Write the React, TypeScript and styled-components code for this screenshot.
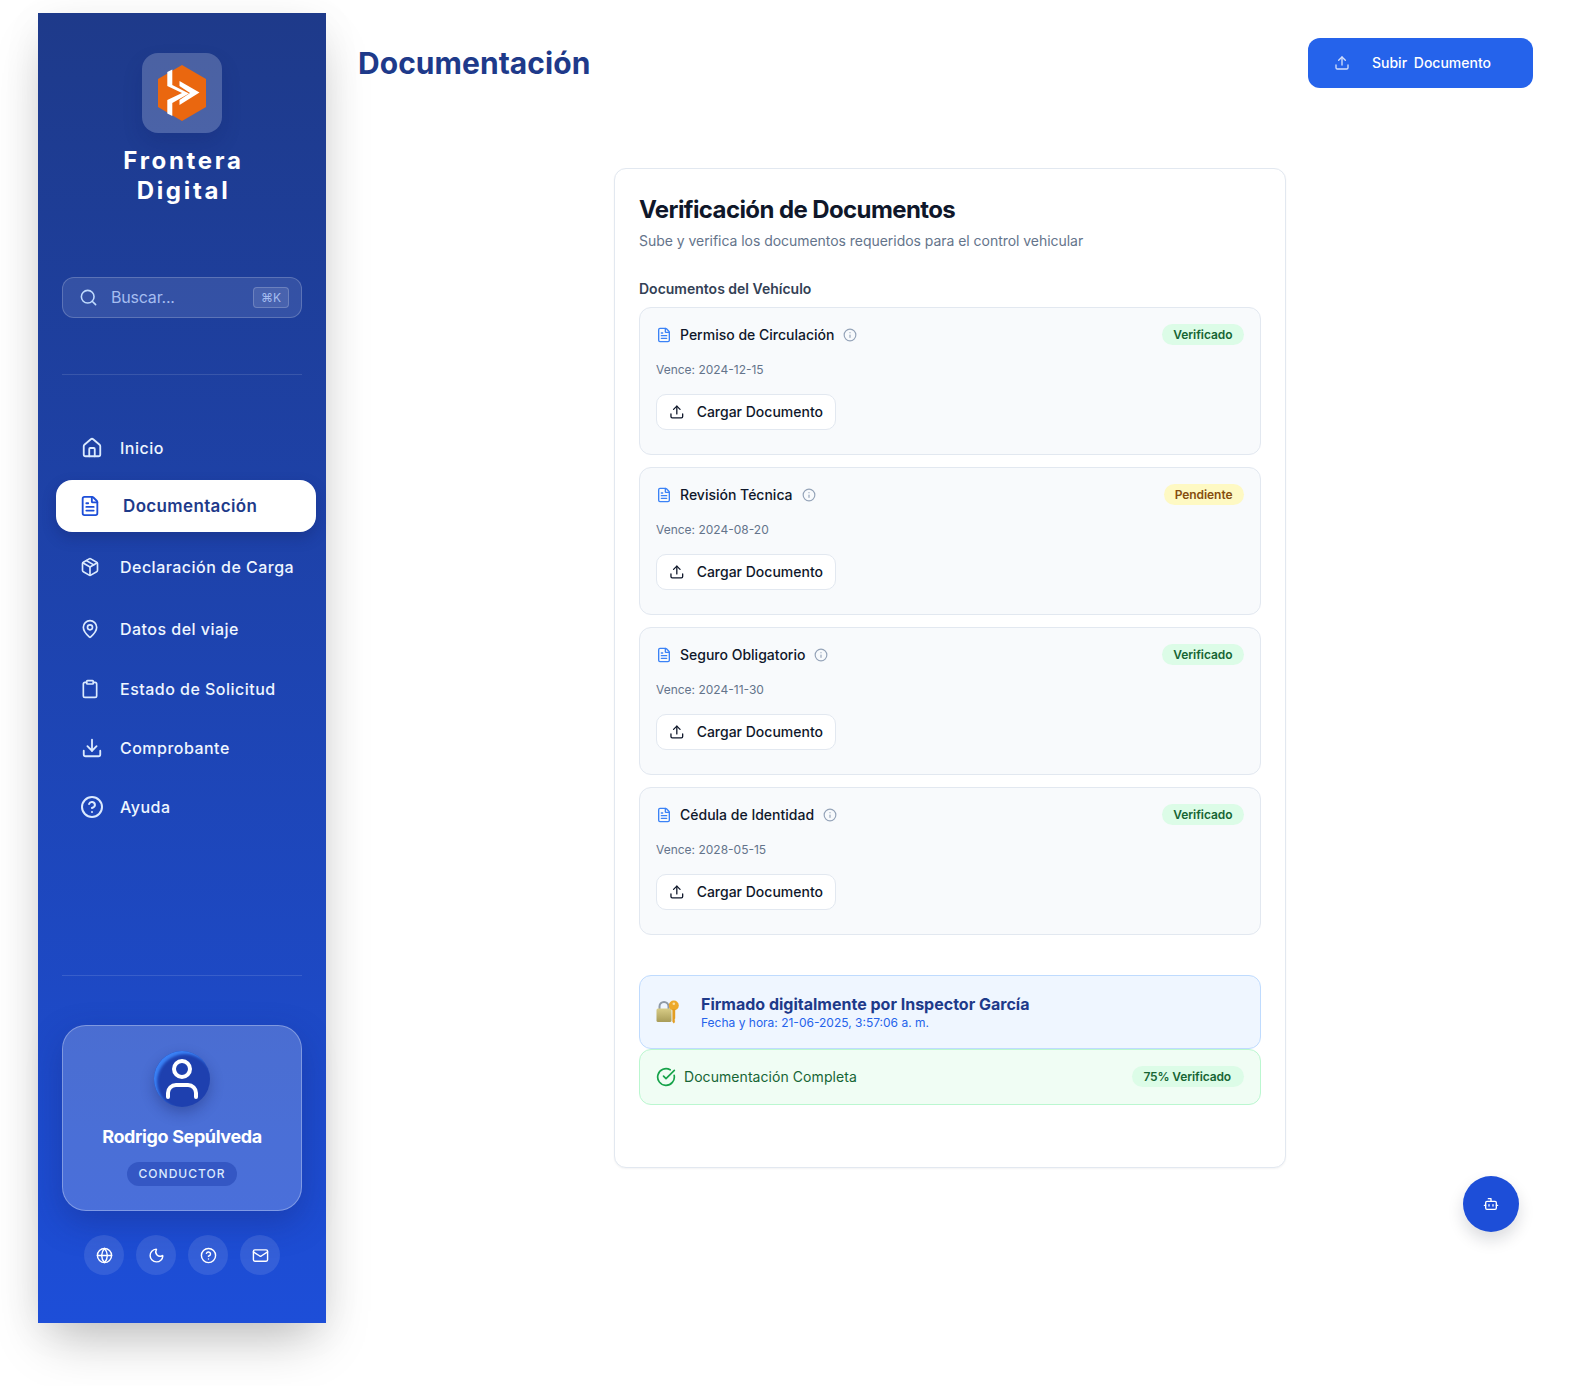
import styled, { createGlobalStyle } from "styled-components"
import {
	Bot,
	CircleCheckBig,
	CircleHelp,
	Clipboard,
	Download,
	FileText,
	Globe,
	House,
	Info,
	Mail,
	MapPin,
	Moon,
	Package,
	Search,
	Upload,
	User,
} from "lucide-react"

const GlobalStyle = createGlobalStyle`
	html, body {
		margin: 0;
		padding: 0;
		background: #fff;
		font-family: "Inter", "Liberation Sans", sans-serif;
	}
	* {
		box-sizing: border-box;
	}
`

const Page = styled.div`
	display: flex;
	align-items: flex-start;
	min-height: 1386px;
	padding: 13px 0 0 38px;
	overflow: hidden;
`

const Sidebar = styled.aside`
	flex: 0 0 288px;
	height: 1310px;
	padding: 40px 24px 0;

	display: flex;
	flex-direction: column;

	background: linear-gradient(180deg, #1e3a8a 0%, #1d4ed8 100%);
	box-shadow: 0 25px 50px -12px rgba(0, 0, 0, .25), 0 8px 40px rgba(0, 0, 0, .05);
`

const LogoTile = styled.div`
	width: 80px;
	height: 80px;
	align-self: center;

	display: flex;
	align-items: center;
	justify-content: center;

	background: rgba(255, 255, 255, .2);
	border-radius: 16px;
	box-shadow: 0 10px 20px rgba(15, 23, 80, .15);
`

const BrandName = styled.h1`
	margin: 13px 0 0;
	padding-left: 3px;

	font-size: 24px;
	line-height: 30px;
	font-weight: 700;
	letter-spacing: 2.7px;
	color: #fff;
	text-align: center;
`

const SearchBox = styled.div`
	height: 41px;
	margin-top: 71px;
	padding: 0 12px 0 16px;

	display: flex;
	align-items: center;

	background: rgba(255, 255, 255, .1);
	border: 1px solid rgba(255, 255, 255, .2);
	border-radius: 12px;
	color: #bfdbfe;
`

const SearchText = styled.span`
	flex: 1;
	margin-left: 13px;
	padding-bottom: 1px;

	font-size: 16px;
	letter-spacing: -.2px;
	color: #a5bdf0;
`

const Kbd = styled.kbd`
	height: 21px;
	padding: 0 7px;

	display: flex;
	align-items: center;

	font-family: "Inter", "DejaVu Sans", sans-serif;
	font-size: 12px;
	color: #a5bdf0;
	background: rgba(255, 255, 255, .1);
	border: 1px solid rgba(255, 255, 255, .2);
	border-radius: 4px;
`

const Divider = styled.div<{ $top: number }>`
	height: 1px;
	margin-top: ${({ $top }) => $top}px;

	background: rgba(255, 255, 255, .12);
`

const NavList = styled.nav`
	margin-top: 51px;

	display: flex;
	flex-direction: column;
	gap: 10px;
`

const NavItem = styled.a<{ $height: number }>`
	height: ${({ $height }) => $height}px;

	display: flex;
	align-items: center;

	font-size: 16px;
	font-weight: 500;
	letter-spacing: .48px;
	color: #eff6ff;
`

const ActiveNavItem = styled.a`
	height: 52px;
	margin: 0 -14px 0 -6px;
	padding-left: 24px;

	display: flex;
	align-items: center;

	font-size: 17px;
	font-weight: 600;
	letter-spacing: .35px;
	color: #1e3a8a;
	background: #fff;
	border-radius: 16px;
	box-shadow: 0 6px 14px rgba(15, 23, 80, .25);
`

const NavIcon = styled.span<{ $offset: number }>`
	width: 58px;
	flex: none;
	padding-left: ${({ $offset }) => $offset}px;

	display: flex;
	align-items: center;
	color: #dbeafe;
`

const ActiveNavIcon = styled.span`
	width: 43px;
	flex: none;
	margin-left: -1px;
	margin-right: 1px;

	display: flex;
	align-items: center;
	color: #1d4ed8;
`

const ProfileCard = styled.div`
	height: 186px;
	margin-top: 49px;
	padding-top: 25px;

	display: flex;
	flex-direction: column;
	align-items: center;

	background: rgba(255, 255, 255, .2);
	border: 1px solid rgba(255, 255, 255, .3);
	border-radius: 24px;
	box-shadow: 0 12px 32px rgba(23, 37, 120, .35);
`

const Avatar = styled.div`
	width: 56px;
	height: 56px;

	display: flex;
	align-items: center;
	justify-content: center;

	color: #fff;
	background: #1e40af;
	border-radius: 50%;
	box-shadow: inset 3px 3px 3px #3b82f6, 0 6px 14px rgba(15, 23, 80, .3);
`

const ProfileName = styled.div`
	margin-top: 16px;

	font-size: 18px;
	line-height: 28px;
	font-weight: 700;
	letter-spacing: -.38px;
	color: #fff;
`

const RoleBadge = styled.div`
	height: 24px;
	margin-top: 11px;
	padding: 0 12px 1px;

	display: flex;
	align-items: center;

	font-size: 12px;
	font-weight: 500;
	letter-spacing: 1px;
	color: #dbeafe;
	background: rgba(30, 64, 175, .5);
	border-radius: 999px;
`

const QuickActions = styled.div`
	margin-top: 24px;

	display: flex;
	justify-content: center;
	gap: 12px;
`

const QuickButton = styled.button`
	width: 40px;
	height: 40px;
	padding: 0;

	display: flex;
	align-items: center;
	justify-content: center;

	color: #fff;
	background: rgba(255, 255, 255, .1);
	border: none;
	border-radius: 50%;
`

const Main = styled.main`
	flex: 1;
	min-width: 0;
`

const Header = styled.header`
	height: 75px;
	padding: 25px 41px 0 32px;

	display: flex;
	align-items: flex-start;
	justify-content: space-between;
`

const PageTitle = styled.h2`
	margin: 0;

	font-size: 30px;
	line-height: 50px;
	font-weight: 700;
	letter-spacing: .05px;
	color: #1e3a8a;
`

const UploadButton = styled.button`
	width: 225px;
	height: 50px;
	padding: 0 0 1px 26px;

	display: flex;
	align-items: center;
	gap: 22px;

	font-family: inherit;
	font-size: 14px;
	font-weight: 450;
	word-spacing: 3px;
	color: #fff;
	background: #2563eb;
	border: none;
	border-radius: 12px;

	svg {
		opacity: .8;
	}
`

const Card = styled.section`
	width: 672px;
	height: 1000px;
	margin: 80px auto 0;
	padding: 25px 24px 24px;

	background: #fff;
	border: 1px solid #e2e8f0;
	border-radius: 12px;
	box-shadow: 0 1px 2px rgba(15, 23, 42, .05);
`

const CardTitle = styled.h3`
	margin: 0;

	font-size: 24px;
	line-height: 32px;
	font-weight: 700;
	letter-spacing: -.6px;
	color: #0f172a;
`

const CardSubtitle = styled.p`
	margin: 5px 0 0;

	font-size: 14px;
	line-height: 20px;
	letter-spacing: -.04px;
	color: #64748b;
`

const SectionLabel = styled.div`
	margin-top: 28px;

	font-size: 14px;
	line-height: 20px;
	font-weight: 600;
	color: #334155;
`

const DocList = styled.div`
	margin-top: 8px;

	display: flex;
	flex-direction: column;
	gap: 12px;
`

const DocCard = styled.article`
	height: 148px;
	padding: 16px;

	background: #f8fafc;
	border: 1px solid #e2e8f0;
	border-radius: 12px;
`

const DocHeader = styled.div`
	height: 21px;

	display: flex;
	align-items: center;
`

const DocIcon = styled.span`
	display: flex;
	margin-right: 8px;
	color: #3b82f6;
`

const DocName = styled.span`
	font-size: 14px;
	font-weight: 450;
	color: #0f172a;
`

const InfoIcon = styled.span`
	display: flex;
	margin-left: 9px;
	color: #94a3b8;
`

const StatusBadge = styled.span<{ $status: "ok" | "wait" }>`
	height: 21px;
	margin-left: auto;
	padding: 0 11.5px 0 11px;

	display: flex;
	align-items: center;

	font-size: 12px;
	font-weight: 600;
	letter-spacing: -.06px;
	color: ${({ $status }) => ($status === "ok" ? "#166534" : "#854d0e")};
	background: ${({ $status }) => ($status === "ok" ? "#dcfce7" : "#fef9c3")};
	border-radius: 999px;
`

const DocDate = styled.div`
	margin-top: 17px;

	font-size: 12px;
	line-height: 16px;
	color: #64748b;
`

const DocButton = styled.button`
	width: 180px;
	height: 36px;
	margin-top: 16px;
	padding: 0 12px 1px;

	display: flex;
	align-items: center;
	gap: 12px;

	font-family: inherit;
	font-size: 14px;
	font-weight: 450;
	white-space: nowrap;
	color: #0f172a;
	background: #fff;
	border: 1px solid #e2e8f0;
	border-radius: 10px;
`

const SignBox = styled.div`
	height: 74px;
	margin-top: 40px;
	padding: 0 16px;

	display: flex;
	align-items: center;
	gap: 21px;

	background: #eff6ff;
	border: 1px solid #bfdbfe;
	border-radius: 12px;
`

const SignText = styled.div`
	padding-top: 1px;
`

const SignTitle = styled.div`
	font-size: 16px;
	line-height: 20px;
	font-weight: 700;
	color: #1e3a8a;
`

const SignDate = styled.div`
	margin-top: 1px;

	font-size: 12px;
	line-height: 16px;
	color: #2563eb;
`

const DoneBox = styled.div`
	height: 56px;
	padding: 0 16px 1px;

	display: flex;
	align-items: center;
	gap: 8px;

	font-size: 14px;
	letter-spacing: .06px;
	color: #166534;
	background: #f0fdf4;
	border: 1px solid #bbf7d0;
	border-radius: 12px;

	svg {
		color: #16a34a;
	}
`

const DoneBadge = styled.span`
	height: 21px;
	margin-left: auto;
	padding: 0 13px 0 11px;

	display: flex;
	align-items: center;

	font-size: 12px;
	font-weight: 600;
	letter-spacing: -.12px;
	color: #166534;
	background: #dcfce7;
	border-radius: 999px;
`

const ChatButton = styled.button`
	position: fixed;
	right: 55px;
	bottom: 154px;

	width: 56px;
	height: 56px;
	padding: 0;

	display: flex;
	align-items: center;
	justify-content: center;

	color: #fff;
	background: #1d4ed8;
	border: none;
	border-radius: 50%;
	box-shadow: 0 8px 16px rgba(15, 23, 42, .15);
`

const BrandLogo = () => (
	<svg width="48" height="56" viewBox="0 0 48 56">
		<path d="M24 0 48 14V42L24 56 0 42V14Z" fill="#ea670f" />
		<path d="M9.300 7 14.300 4.500V20L31 28.500 14.300 38V51L9.300 48.500V35L24 28 9.300 21Z" fill="#fff" />
		<path d="M21.500 16 41.500 27.500 21.500 40V35L32 28 21.500 21Z" fill="#fff" />
	</svg>
)

const LockKey = () => (
	<svg width="24" height="24" viewBox="0 0 24 24">
		<defs>
			<linearGradient id="lockBody" x1="0" y1="0" x2="0" y2="1">
				<stop offset="0" stopColor="#d8cc86" />
				<stop offset="1" stopColor="#a89c58" />
			</linearGradient>
		</defs>
		<path d="M3.500 10V6.500a4.500 4.500 0 0 1 9 0V10" fill="none" stroke="#8f9aa6" strokeWidth="2" />
		<rect x="0.500" y="8.500" width="15" height="13.500" rx="1.500" fill="url(#lockBody)" />
		<circle cx="17.800" cy="5.500" r="5" fill="#eda92b" />
		<path d="M16.400 9h2.800v9.500l-.8.8.8.8-.8.800.8.800-1.400 1.800-1.400-1.800z" fill="#e39d22" />
		<circle cx="17.800" cy="3.800" r="1.300" fill="#fbe0a0" />
	</svg>
)

const documents: { name: string; date: string; status: "ok" | "wait"; label: string }[] = [
	{ name: "Permiso de Circulación", date: "2024-12-15", status: "ok", label: "Verificado" },
	{ name: "Revisión Técnica", date: "2024-08-20", status: "wait", label: "Pendiente" },
	{ name: "Seguro Obligatorio", date: "2024-11-30", status: "ok", label: "Verificado" },
	{ name: "Cédula de Identidad", date: "2028-05-15", status: "ok", label: "Verificado" },
]

const App = () => {
	return (
		<Page>
			<GlobalStyle />
			<Sidebar>
				<LogoTile>
					<BrandLogo />
				</LogoTile>
				<BrandName>
					Frontera
					<br />
					Digital
				</BrandName>
				<SearchBox>
					<Search size={19} />
					<SearchText>Buscar...</SearchText>
					<Kbd>⌘K</Kbd>
				</SearchBox>
				<Divider $top={56} />
				<NavList>
					<NavItem $height={44}>
						<NavIcon $offset={19}><House size={22} /></NavIcon>
						Inicio
					</NavItem>
					<ActiveNavItem>
						<ActiveNavIcon><FileText size={22} /></ActiveNavIcon>
						Documentación
					</ActiveNavItem>
					<NavItem $height={50}>
						<NavIcon $offset={18}><Package size={20} /></NavIcon>
						Declaración de Carga
					</NavItem>
					<NavItem $height={54}>
						<NavIcon $offset={18}><MapPin size={20} /></NavIcon>
						Datos del viaje
					</NavItem>
					<NavItem $height={46}>
						<NavIcon $offset={18}><Clipboard size={20} /></NavIcon>
						Estado de Solicitud
					</NavItem>
					<NavItem $height={52}>
						<NavIcon $offset={19}><Download size={22} /></NavIcon>
						Comprobante
					</NavItem>
					<NavItem $height={46}>
						<NavIcon $offset={18}><CircleHelp size={24} /></NavIcon>
						Ayuda
					</NavItem>
				</NavList>
				<Divider $top={145} />
				<ProfileCard>
					<Avatar><User size={48} /></Avatar>
					<ProfileName>Rodrigo Sepúlveda</ProfileName>
					<RoleBadge>CONDUCTOR</RoleBadge>
				</ProfileCard>
				<QuickActions>
					<QuickButton><Globe size={17} /></QuickButton>
					<QuickButton><Moon size={17} /></QuickButton>
					<QuickButton><CircleHelp size={17} /></QuickButton>
					<QuickButton><Mail size={17} /></QuickButton>
				</QuickActions>
			</Sidebar>
			<Main>
				<Header>
					<PageTitle>Documentación</PageTitle>
					<UploadButton>
						<Upload size={16} />
						Subir Documento
					</UploadButton>
				</Header>
				<Card>
					<CardTitle>Verificación de Documentos</CardTitle>
					<CardSubtitle>Sube y verifica los documentos requeridos para el control vehicular</CardSubtitle>
					<SectionLabel>Documentos del Vehículo</SectionLabel>
					<DocList>
						{documents.map((doc) => (
							<DocCard key={doc.name}>
								<DocHeader>
									<DocIcon><FileText size={16} /></DocIcon>
									<DocName>{doc.name}</DocName>
									<InfoIcon><Info size={14} /></InfoIcon>
									<StatusBadge $status={doc.status}>{doc.label}</StatusBadge>
								</DocHeader>
								<DocDate>Vence: {doc.date}</DocDate>
								<DocButton>
									<Upload size={16} />
									Cargar Documento
								</DocButton>
							</DocCard>
						))}
					</DocList>
					<SignBox>
						<LockKey />
						<SignText>
							<SignTitle>Firmado digitalmente por Inspector García</SignTitle>
							<SignDate>Fecha y hora: 21-06-2025, 3:57:06 a. m.</SignDate>
						</SignText>
					</SignBox>
					<DoneBox>
						<CircleCheckBig size={20} />
						Documentación Completa
						<DoneBadge>75% Verificado</DoneBadge>
					</DoneBox>
				</Card>
			</Main>
			<ChatButton><Bot size={16} /></ChatButton>
		</Page>
	)
}

export default App
